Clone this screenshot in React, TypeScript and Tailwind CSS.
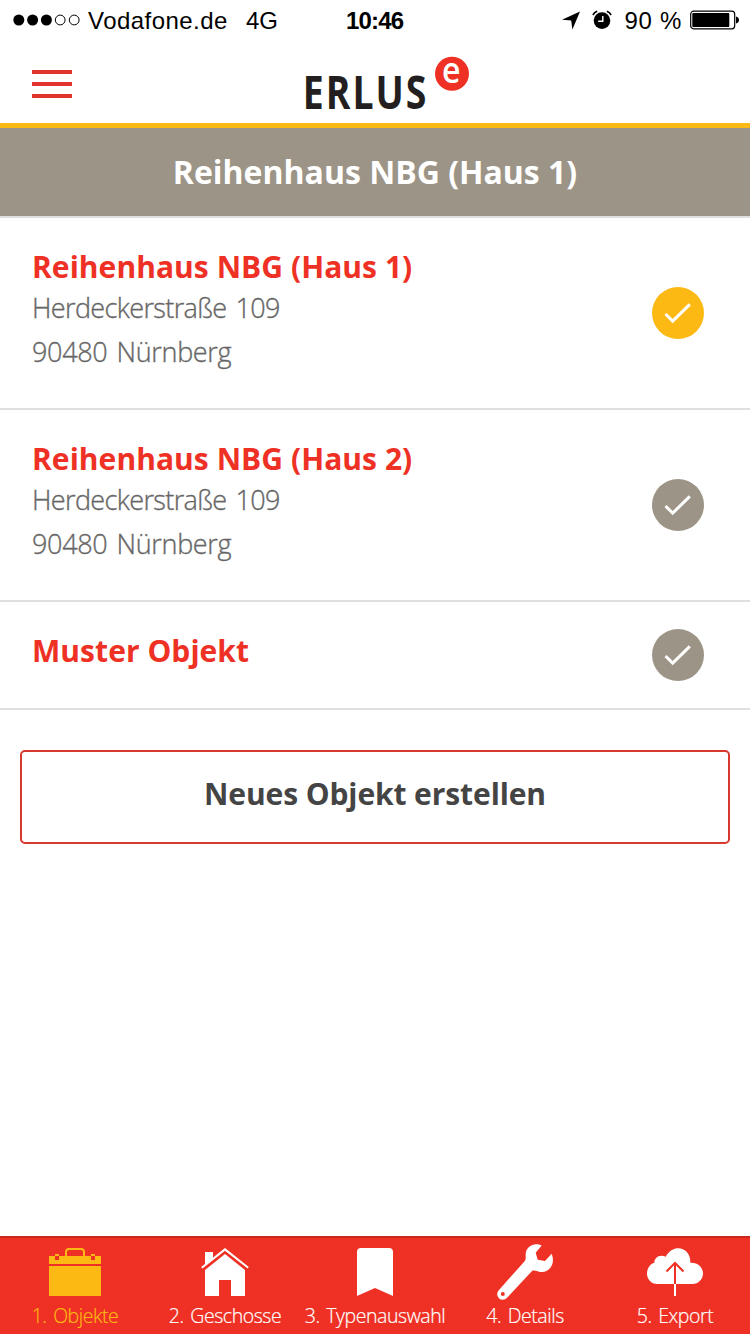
import type { ReactNode } from "react";

const frutiger = "font-['Open_Sans','Noto_Sans',sans-serif]";
const helvetica = "font-['Liberation_Sans',Arial,sans-serif]";

function StatusBar() {
  return (
    <div className={`flex h-10 items-center pl-[13px] pr-[10px] text-[24px] text-black ${helvetica}`}>
      <svg width="68" height="12" viewBox="0 0 68 12" className="shrink-0">
        <circle cx="5.8" cy="6" r="5.5" />
        <circle cx="19.6" cy="6" r="5.5" />
        <circle cx="33.4" cy="6" r="5.5" />
        <circle cx="47.2" cy="6" r="4.9" fill="none" stroke="#000" strokeWidth="1" />
        <circle cx="61.2" cy="6" r="4.9" fill="none" stroke="#000" strokeWidth="1" />
      </svg>
      <span className="ml-[7px] w-[158px] whitespace-nowrap pt-0.5 tracking-[0.45px]">Vodafone.de</span>
      <span className="w-[100px] pt-0.5">4G</span>
      <span className="pt-0.5 font-bold tracking-[-0.8px]">10:46</span>
      <div className="ml-auto flex items-center">
        <svg width="20" height="20" viewBox="0 0 20 20">
          <path d="M18 1.500 0 9.700l9.200.7L10.400 19.500z" />
        </svg>
        <svg width="20" height="20" viewBox="0 0 20 20" className="ml-[10px]">
          <circle cx="10" cy="10.600" r="8.300" />
          <path d="M.9 5A8 8 0 0 1 5.200 1.300M19.100 5a8 8 0 0 0-4.300-3.700" fill="none" stroke="#000" strokeWidth="1.600" />
          <path d="M10.800 6v5.200H6.200" fill="none" stroke="#fff" strokeWidth="1.400" />
        </svg>
        <span className="ml-3 whitespace-nowrap pt-0.5 tracking-[0.7px]">90 %</span>
        <svg width="50" height="20" viewBox="0 0 50 20" className="ml-[8px]">
          <rect x=".7" y="1.200" width="44" height="17.600" rx="3" fill="none" stroke="#000" strokeWidth="1.200" />
          <rect x="2.300" y="3" width="37" height="14" rx="1" />
          <path d="M46 6.500c4 .8 4 6.200 0 7z" />
        </svg>
      </div>
    </div>
  );
}

function Header() {
  return (
    <header className="grid h-[88px] grid-cols-[304px_1fr] border-b-[5px] border-[#fdb913]">
      <div className="flex flex-col gap-2 pl-8 pt-[30px]">
        <div className="h-1 w-10 bg-[#e1352b]" />
        <div className="h-1 w-10 bg-[#e1352b]" />
        <div className="h-1 w-10 bg-[#e1352b]" />
      </div>
      <svg width="170" height="83" viewBox="0 -4 170 83" className={`overflow-visible ${frutiger}`}>
        <text
          transform="translate(-1.300 64.500) scale(.805 1)"
          fontSize="46.500"
          fontWeight="700"
          fill="#231f20"
          letterSpacing="2.500"
        >
          ERLUS
        </text>
        <circle cx="148" cy="29.700" r="17" fill="#ee3124" />
        <text x="138" y="39" fontSize="36" fontWeight="600" fill="#fff" textLength="18.500" lengthAdjust="spacingAndGlyphs">
          e
        </text>
      </svg>
    </header>
  );
}

function CheckBadge({ active }: { active?: boolean }) {
  return (
    <svg width="52" height="52" viewBox="0 0 52 52" className={active ? "text-[#fdb913]" : "text-[#9c9486]"}>
      <circle cx="26" cy="26" r="26" fill="currentColor" />
      <path d="M13.500 27 20.700 34.100 37.800 17.400" fill="none" stroke="#fff" strokeWidth="3" />
    </svg>
  );
}

type Item = { title: string; lines: string[]; active?: boolean };

const items: Item[] = [
  { title: "Reihenhaus NBG (Haus 1)", lines: ["Herdeckerstraße 109", "90480 Nürnberg"], active: true },
  { title: "Reihenhaus NBG (Haus 2)", lines: ["Herdeckerstraße 109", "90480 Nürnberg"] },
  { title: "Muster Objekt", lines: [] },
];

function ObjectRow({ item }: { item: Item }) {
  return (
    <li
      className={`flex items-center justify-between border-b-2 border-[#dfdfdd] pl-8 pr-[46px] ${
        item.lines.length ? "h-[192px]" : "h-[108px]"
      }`}
    >
      <div className="self-start pt-[30px]">
        <h2 className="mb-px whitespace-nowrap text-[30px] font-bold leading-[37px] tracking-[0.05px] text-[#ee3124]">
          {item.title}
        </h2>
        {item.lines.map((line, i) => (
          <p
            key={line}
            className={`whitespace-nowrap text-[27px] font-light leading-[44px] text-[#666] [-webkit-text-stroke:0.35px_#666] [word-spacing:2.500px] ${
              i === 0 ? "tracking-[-0.62px]" : "tracking-[-0.33px]"
            }`}
          >
            {line}
          </p>
        ))}
      </div>
      <CheckBadge active={item.active} />
    </li>
  );
}

function Tab({ label, active, children }: { label: string; active?: boolean; children: ReactNode }) {
  return (
    <button className={`flex flex-col items-center ${active ? "text-[#fdb913]" : "text-white"}`}>
      <svg width="60" height="64" viewBox="0 0 60 64" fill="currentColor">
        {children}
      </svg>
      <span className="whitespace-nowrap text-[19.500px] font-light leading-[27px] tracking-[-0.45px] [-webkit-text-stroke:0.2px_currentColor] [word-spacing:2px]">
        {label}
      </span>
    </button>
  );
}

export default function App() {
  return (
    <div className={`flex h-[1334px] w-[750px] flex-col overflow-hidden bg-white ${frutiger}`}>
      <StatusBar />
      <Header />
      <h1 className="h-[90px] border-b-2 border-[#dfdfdd] bg-[#9c9486] text-center text-[32px] font-bold leading-[88px] text-white">
        Reihenhaus NBG (Haus 1)
      </h1>
      <ul>
        {items.map((item) => (
          <ObjectRow key={item.title} item={item} />
        ))}
      </ul>
      <button className="mx-5 mt-10 h-[94px] rounded-[5px] border-2 border-[#d8392f] pb-2 text-[30px] font-bold tracking-[-0.1px] text-[#444]">
        Neues Objekt erstellen
      </button>
      <nav className="mt-auto grid h-[98px] grid-cols-5 items-start border-t-2 border-[#c9281d] bg-[#ee3124]">
        <Tab label="1. Objekte" active>
          <path d="M4 18h6v4h4v-4h32v4h4v-4h6v8H4zM10 16h4v2h-4zM46 16h4v2h-4zM4 28h52v30H4z" />
          <path d="M21 18v-4a3 3 0 0 1 3-3h12a3 3 0 0 1 3 3v4" fill="none" stroke="currentColor" strokeWidth="2" />
        </Tab>
        <Tab label="2. Geschosse">
          <path d="M10 14h8v6l-8 7z" />
          <path d="M6.800 29.800 30 11.400 53.200 29.800" fill="none" stroke="currentColor" strokeWidth="2" />
          <path d="M30 16 50 32v26H36V42H24v16H10V32z" />
        </Tab>
        <Tab label="3. Typenauswahl">
          <path d="M12 58V14a4 4 0 0 1 4-4h28a4 4 0 0 1 4 4v44L30 50z" />
        </Tab>
        <Tab label="4. Details">
          <path d="M46.700 7.600C39 3.500 31 9 30.700 15.500c-.2 3 .5 5.500-.9 7.500L3.800 52.200a5.600 5.600 0 0 0 8 7.900L37.500 32.500C41 31.800 44 34.500 48 34c7-.8 12.500-8.500 8.700-18.300L50 23l-7.300-1.300-2-7z" />
          <circle cx="7.800" cy="56" r="2" fill="#ee3124" />
        </Tab>
        <Tab label="5. Export">
          <path d="M12.500 46C6 46 2 41 2 35.500c0-5 3-9.500 7.300-10.800C9.500 19 15 16 20.800 18.700 28 5 46 9 45.300 24.700 52.500 24 58 29 58 35.500 58 41 53.500 46 47.500 46z" />
          <path d="M30 46V25M21.500 33.500 30 25l8.500 8.500" fill="none" stroke="#ee3124" strokeWidth="2" />
          <path d="M29 46h2v12h-2z" />
        </Tab>
      </nav>
    </div>
  );
}
